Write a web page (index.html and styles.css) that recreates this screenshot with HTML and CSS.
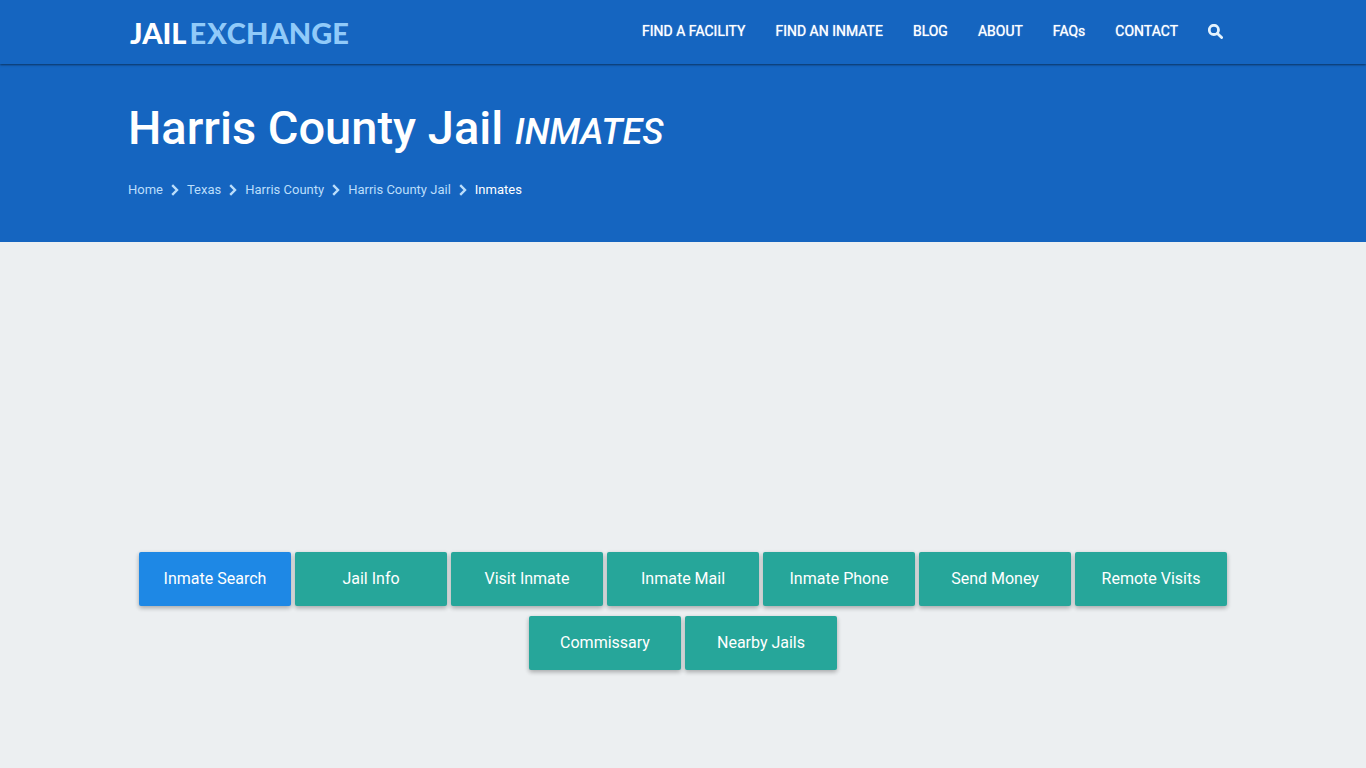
FILE: index.html
```
<!DOCTYPE html>
<html lang="en">
<head>
  <meta charset="UTF-8">
  <meta name="viewport" content="width=device-width, initial-scale=1">
  <title>Harris County Jail Inmates - Jail Exchange</title>
  <link rel="stylesheet" href="styles.css">
</head>

<body>
  <header class="navbar">
    <div class="container nav-wrapper">
      <a class="logo" href="#">JAIL<span class="logo-light">E<span class="logo-x">X</span>CHANGE</span></a>
      <nav>
        <ul class="nav-links">
          <li><a href="#">FIND A FACILITY</a></li>
          <li><a href="#">FIND AN INMATE</a></li>
          <li><a href="#">BLOG</a></li>
          <li><a href="#">ABOUT</a></li>
          <li><a href="#">FAQs</a></li>
          <li><a href="#">CONTACT</a></li>
          <li>
            <a href="#" aria-label="Search">
              <svg class="search-icon" viewBox="0 0 14 14">
                <circle cx="5.5" cy="5.5" r="4.3" />
                <path d="M8.8 8.8L12.7 12.7" />
              </svg>
            </a>
          </li>
        </ul>
      </nav>
    </div>
  </header>

  <div class="page-header">
    <div class="container">
      <h1>Harris County Jail <em>INMATES</em></h1>
      <ol class="breadcrumbs">
        <li><a href="#">Home</a></li>
        <li><svg class="chevron" viewBox="0 0 8 12"><path d="M1.2 1.2L6 6L1.2 10.8" /></svg><a href="#">Texas</a></li>
        <li><svg class="chevron" viewBox="0 0 8 12"><path d="M1.2 1.2L6 6L1.2 10.8" /></svg><a href="#">Harris County</a></li>
        <li><svg class="chevron" viewBox="0 0 8 12"><path d="M1.2 1.2L6 6L1.2 10.8" /></svg><a href="#">Harris County Jail</a></li>
        <li><svg class="chevron" viewBox="0 0 8 12"><path d="M1.2 1.2L6 6L1.2 10.8" /></svg><a class="current" href="#">Inmates</a></li>
      </ol>
    </div>
  </div>

  <main class="container">
    <div class="ad-space"></div>
    <div class="tabs">
      <a class="btn active" href="#">Inmate Search</a>
      <a class="btn" href="#">Jail Info</a>
      <a class="btn" href="#">Visit Inmate</a>
      <a class="btn" href="#">Inmate Mail</a>
      <a class="btn" href="#">Inmate Phone</a>
      <a class="btn" href="#">Send Money</a>
      <a class="btn" href="#">Remote Visits</a>
      <a class="btn" href="#">Commissary</a>
      <a class="btn" href="#">Nearby Jails</a>
    </div>
  </main>
</body>
</html>
```
FILE: styles.css
```
* {
  box-sizing: border-box;
}

body {
  margin: 0;
  font-family: Roboto, sans-serif;
  font-size: 14px;
  background-color: #eceff1;
}

a {
  text-decoration: none;
}

.container {
  width: 90%;
  max-width: 1110px;
  margin: 0 auto;
}

.navbar {
  position: relative;
  background-color: #1565c0;
  box-shadow: 0 1px 2px rgba(0, 0, 0, 0.5);
}

.nav-wrapper {
  display: flex;
  justify-content: space-between;
  align-items: center;
  height: 64px;
}

.logo {
  padding-left: 2px;
  font-family: Lato, sans-serif;
  font-size: 29px;
  font-weight: 900;
  color: #fff;
}

.logo-light {
  margin-left: 3px;
  color: #90caf9;
}

/* thin cut through the X */
.logo-x {
  position: relative;
  margin-left: 1px;
}

.logo-x::after {
  content: "";
  position: absolute;
  left: 11px;
  top: 7px;
  width: 1px;
  height: 12px;
  background-color: #1565c0;
  transform: rotate(-32deg);
}

.nav-links {
  list-style: none;
  display: flex;
  margin: 0;
  padding: 0;
}

.nav-links a {
  display: flex;
  align-items: center;
  height: 64px;
  padding: 0 15px 2px;
  color: #fff;
  text-shadow: 0 0 1px #e3f2fd;
}

.search-icon {
  width: 15px;
  height: 15px;
  fill: none;
  stroke: #e3f2fd;
  stroke-width: 2.6;
  stroke-linecap: round;
}

.page-header {
  background-color: #1565c0;
  color: #fff;
  padding: 32px 0 43px;
}

.page-header h1 {
  margin: 0;
  font-size: 47px;
  font-weight: 500;
  line-height: 64px;
}

.page-header em {
  font-size: 36px;
}

.breadcrumbs {
  list-style: none;
  display: flex;
  margin: 17px 0 0;
  padding: 0;
  font-size: 13px;
  line-height: 18px;
}

.breadcrumbs li {
  display: flex;
  align-items: center;
}

.breadcrumbs a {
  color: #bbdefb;
}

.breadcrumbs .current {
  color: #fff;
}

.chevron {
  width: 8px;
  height: 12px;
  margin: 0 8px;
  fill: none;
  stroke: #bbdefb;
  stroke-width: 2.4;
}

.ad-space {
  height: 310px;
}

.tabs {
  display: flex;
  flex-wrap: wrap;
  justify-content: center;
  gap: 10px 4px;
  padding-bottom: 20px;
}

.btn {
  width: 152px;
  border-radius: 2px;
  background-color: #26a69a;
  box-shadow: 0 2px 5px rgba(0, 0, 0, 0.2), 0 2px 4px rgba(0, 0, 0, 0.12);
  color: #fff;
  font-size: 16px;
  line-height: 54px;
  text-align: center;
}

.btn.active {
  background-color: #1e88e5;
}
```
